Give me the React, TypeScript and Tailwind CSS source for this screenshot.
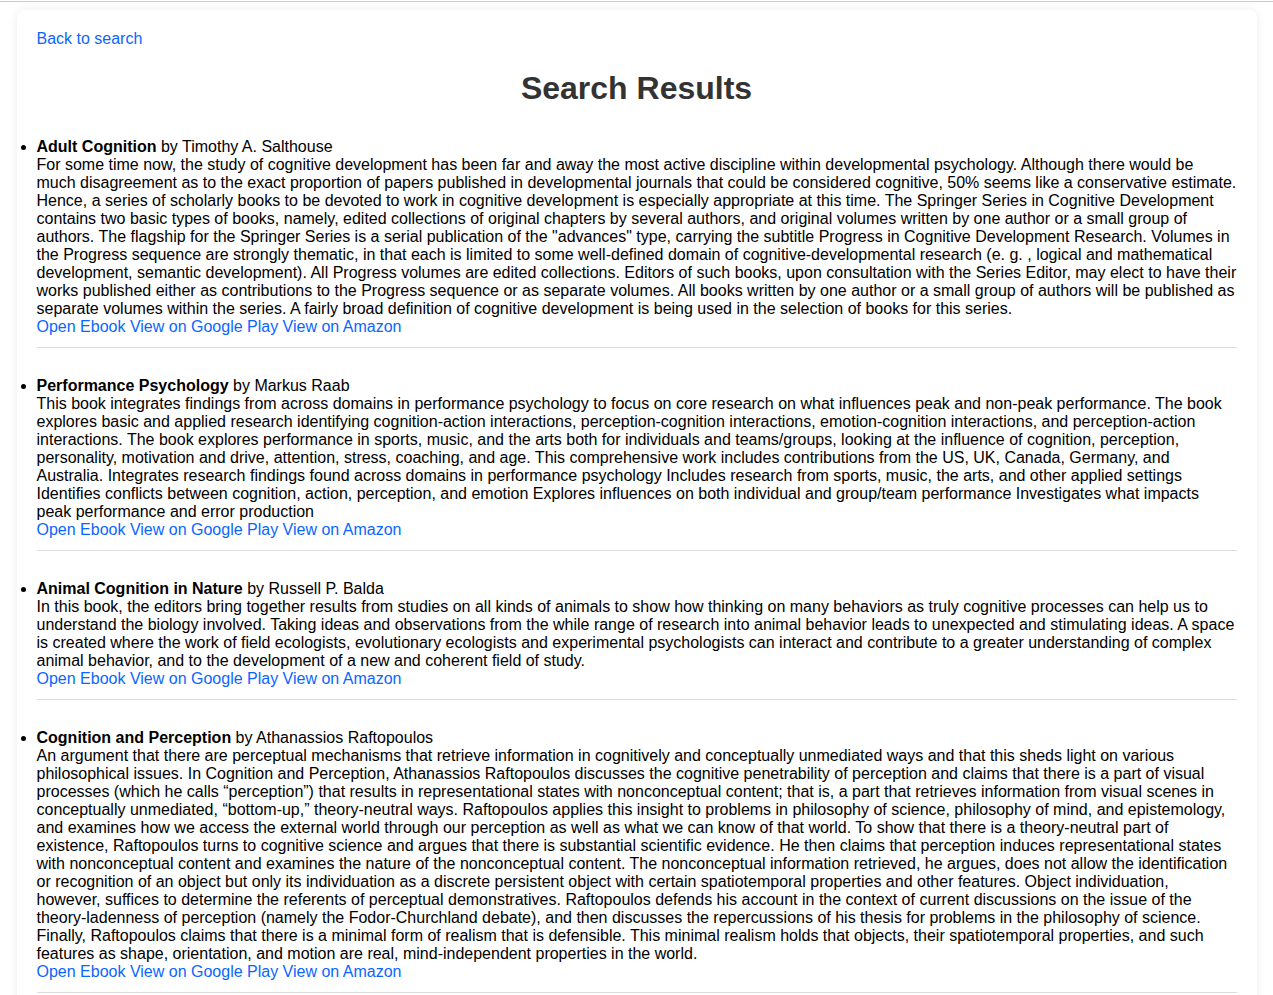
const books = [
  {
    title: "Adult Cognition",
    author: "Timothy A. Salthouse",
    description:
      'For some time now, the study of cognitive development has been far and away the most active discipline within developmental psychology. Although there would be much disagreement as to the exact proportion of papers published in developmental journals that could be considered cognitive, 50% seems like a conservative estimate. Hence, a series of scholarly books to be devoted to work in cognitive development is especially appropriate at this time. The Springer Series in Cognitive Development contains two basic types of books, namely, edited collections of original chapters by several authors, and original volumes written by one author or a small group of authors. The flagship for the Springer Series is a serial publication of the "advances" type, carrying the subtitle Progress in Cognitive Development Research. Volumes in the Progress sequence are strongly thematic, in that each is limited to some well-defined domain of cognitive-developmental research (e. g. , logical and mathematical development, semantic development). All Progress volumes are edited collections. Editors of such books, upon consultation with the Series Editor, may elect to have their works published either as contributions to the Progress sequence or as separate volumes. All books written by one author or a small group of authors will be published as separate volumes within the series. A fairly broad definition of cognitive development is being used in the selection of books for this series.',
  },
  {
    title: "Performance Psychology",
    author: "Markus Raab",
    description:
      "This book integrates findings from across domains in performance psychology to focus on core research on what influences peak and non-peak performance. The book explores basic and applied research identifying cognition-action interactions, perception-cognition interactions, emotion-cognition interactions, and perception-action interactions. The book explores performance in sports, music, and the arts both for individuals and teams/groups, looking at the influence of cognition, perception, personality, motivation and drive, attention, stress, coaching, and age. This comprehensive work includes contributions from the US, UK, Canada, Germany, and Australia. Integrates research findings found across domains in performance psychology Includes research from sports, music, the arts, and other applied settings Identifies conflicts between cognition, action, perception, and emotion Explores influences on both individual and group/team performance Investigates what impacts peak performance and error production",
  },
  {
    title: "Animal Cognition in Nature",
    author: "Russell P. Balda",
    description:
      "In this book, the editors bring together results from studies on all kinds of animals to show how thinking on many behaviors as truly cognitive processes can help us to understand the biology involved. Taking ideas and observations from the while range of research into animal behavior leads to unexpected and stimulating ideas. A space is created where the work of field ecologists, evolutionary ecologists and experimental psychologists can interact and contribute to a greater understanding of complex animal behavior, and to the development of a new and coherent field of study.",
  },
  {
    title: "Cognition and Perception",
    author: "Athanassios Raftopoulos",
    description:
      "An argument that there are perceptual mechanisms that retrieve information in cognitively and conceptually unmediated ways and that this sheds light on various philosophical issues. In Cognition and Perception, Athanassios Raftopoulos discusses the cognitive penetrability of perception and claims that there is a part of visual processes (which he calls \u201cperception\u201d) that results in representational states with nonconceptual content; that is, a part that retrieves information from visual scenes in conceptually unmediated, \u201cbottom-up,\u201d theory-neutral ways. Raftopoulos applies this insight to problems in philosophy of science, philosophy of mind, and epistemology, and examines how we access the external world through our perception as well as what we can know of that world. To show that there is a theory-neutral part of existence, Raftopoulos turns to cognitive science and argues that there is substantial scientific evidence. He then claims that perception induces representational states with nonconceptual content and examines the nature of the nonconceptual content. The nonconceptual information retrieved, he argues, does not allow the identification or recognition of an object but only its individuation as a discrete persistent object with certain spatiotemporal properties and other features. Object individuation, however, suffices to determine the referents of perceptual demonstratives. Raftopoulos defends his account in the context of current discussions on the issue of the theory-ladenness of perception (namely the Fodor-Churchland debate), and then discusses the repercussions of his thesis for problems in the philosophy of science. Finally, Raftopoulos claims that there is a minimal form of realism that is defensible. This minimal realism holds that objects, their spatiotemporal properties, and such features as shape, orientation, and motion are real, mind-independent properties in the world.",
  },
];

export default function App() {
  return (
    <div className="min-h-screen bg-white pt-px font-['Liberation_Sans',Arial,sans-serif] text-[16px] leading-[18px] text-black">
      <div className="h-px bg-[#cccccc]" />

      <div className="mx-auto mt-[8px] w-[1240px] rounded-lg bg-white p-5 shadow-[0_0_10px_rgba(0,0,0,0.08)]">
        <a href="#" className="text-[#0a66ff]">
          Back to search
        </a>

        {/* Titulo */}
        <h1 className="mt-[22px] mb-[31px] text-center text-[32px] leading-[37px] font-bold text-[#333333]">
          Search Results
        </h1>

        {/* Resultados */}
        <ul className="list-disc pl-0">
          {books.map((book) => (
            <li key={book.title} className="mb-[29px]">
              <strong>{book.title}</strong> by {book.author}
              <br />
              {book.description}
              <br />
              <a href="#" className="text-[#0a66ff]">Open Ebook</a>{" "}
              <a href="#" className="text-[#0a66ff]">View on Google Play</a>{" "}
              <a href="#" className="text-[#0a66ff]">View on Amazon</a>
              <hr className="mt-[11px] border-t border-[#dddddd]" />
            </li>
          ))}
        </ul>
      </div>
    </div>
  );
}
